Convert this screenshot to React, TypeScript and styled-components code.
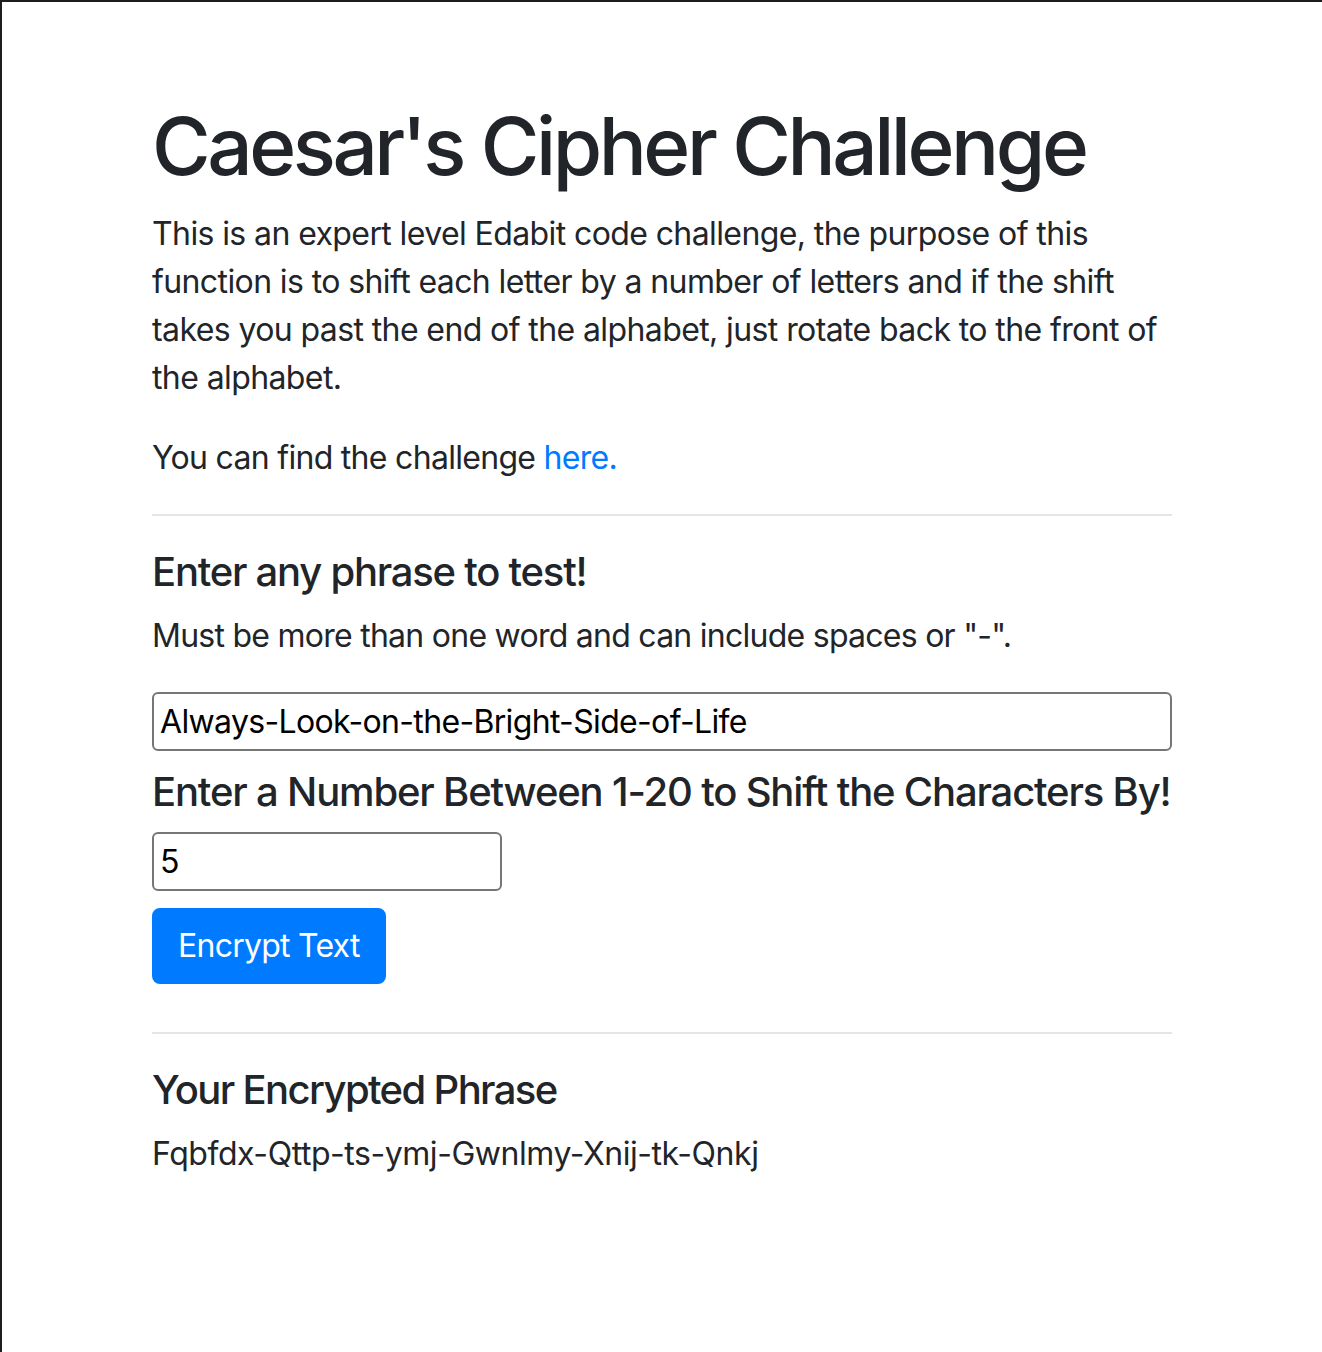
import React, { useState } from "react";
import styled, { createGlobalStyle } from "styled-components";

const GlobalStyle = createGlobalStyle`
  html, body {
    margin: 0;
    padding: 0;
    background: #ffffff;
  }
  body {
    font-family: Inter, "Noto Sans", "Liberation Sans", sans-serif;
    color: #212529;
    -webkit-font-smoothing: antialiased;
  }
  *, *::before, *::after { box-sizing: border-box; }
`;

const Page = styled.div`
  min-height: 1352px;
  border-top: 2px solid #1d1d1f;
  border-left: 2px solid #1d1d1f;
`;

const Container = styled.main`
  max-width: 1080px;
  margin: 0 auto;
  padding: 96px 30px 0;
`;

const Title = styled.h1`
  font-size: 80px;
  font-weight: 500;
  line-height: 1.2;
  letter-spacing: -3.45px;
  margin: 0 0 16px;
`;

const Text = styled.p<{ $tight?: number }>`
  font-size: 32px;
  line-height: 48px;
  letter-spacing: ${(p) => p.$tight ?? -0.66}px;
  margin: 0 0 32px;
`;

const Link = styled.a`
  color: #007bff;
  text-decoration: none;
`;

const Divider = styled.hr`
  margin: 32px 0;
  border: 0;
  border-top: 2px solid rgba(0, 0, 0, 0.1);
`;

const Heading = styled.h5<{ $tight?: number }>`
  font-size: 40px;
  font-weight: 500;
  line-height: 48px;
  letter-spacing: ${(p) => p.$tight ?? -1.1}px;
  white-space: nowrap;
  margin: 0 0 16px;
`;

const Field = styled.div<{ $gap: number }>`
  margin-bottom: ${(p) => p.$gap}px;
`;

const TextInput = styled.input<{ $width: string }>`
  display: block;
  width: ${(p) => p.$width};
  height: 59px;
  margin: 0;
  padding: 0 6px;
  font-family: inherit;
  font-size: 32px;
  line-height: 48px;
  letter-spacing: -0.66px;
  color: #000;
  background: #fff;
  border: 2px solid #767676;
  border-radius: 6px;
  outline: none;
`;

const Button = styled.button`
  display: inline-block;
  margin: 0 0 16px;
  padding: 12px 24px;
  font-family: inherit;
  font-size: 32px;
  line-height: 48px;
  font-weight: 400;
  letter-spacing: -0.75px;
  color: #fff;
  background: #007bff;
  border: 2px solid #007bff;
  border-radius: 8px;
  cursor: pointer;
`;

function shift(text: string, n: number) {
  return text.replace(/[a-z]/gi, (c) => {
    const base = c === c.toUpperCase() ? 65 : 97;
    return String.fromCharCode(((c.charCodeAt(0) - base + n) % 26 + 26) % 26 + base);
  });
}

export default function App() {
  const [phrase, setPhrase] = useState("Always-Look-on-the-Bright-Side-of-Life");
  const [num, setNum] = useState("5");
  const [result, setResult] = useState(shift("Always-Look-on-the-Bright-Side-of-Life", 5));

  return (
    <>
      <GlobalStyle />
      <Page>
        <Container>
          <Title>Caesar's Cipher Challenge</Title>
          <Text $tight={-0.6}>
            This is an expert level Edabit code challenge, the purpose of this
            function is to shift each letter by a number of letters and if the
            shift takes you past the end of the alphabet, just rotate back to the
            front of the alphabet.
          </Text>
          <Text $tight={-0.7}>
            You can find the challenge <Link href="#">here.</Link>
          </Text>
          <Divider />
          <Heading $tight={-1.24}>Enter any phrase to test!</Heading>
          <Text $tight={-0.74}>Must be more than one word and can include spaces or "-".</Text>
          <Field $gap={17}>
            <TextInput
              $width="100%"
              value={phrase}
              onChange={(e) => setPhrase(e.target.value)}
            />
          </Field>
          <Heading $tight={-1.17}>Enter a Number Between 1-20 to Shift the Characters By!</Heading>
          <Field $gap={17}>
            <TextInput
              $width="350px"
              value={num}
              onChange={(e) => setNum(e.target.value)}
            />
          </Field>
          <Button onClick={() => setResult(shift(phrase, parseInt(num, 10) || 0))}>
            Encrypt Text
          </Button>
          <Divider />
          <Heading $tight={-1.62}>Your Encrypted Phrase</Heading>
          <Text $tight={-0.45}>{result}</Text>
        </Container>
      </Page>
    </>
  );
}
